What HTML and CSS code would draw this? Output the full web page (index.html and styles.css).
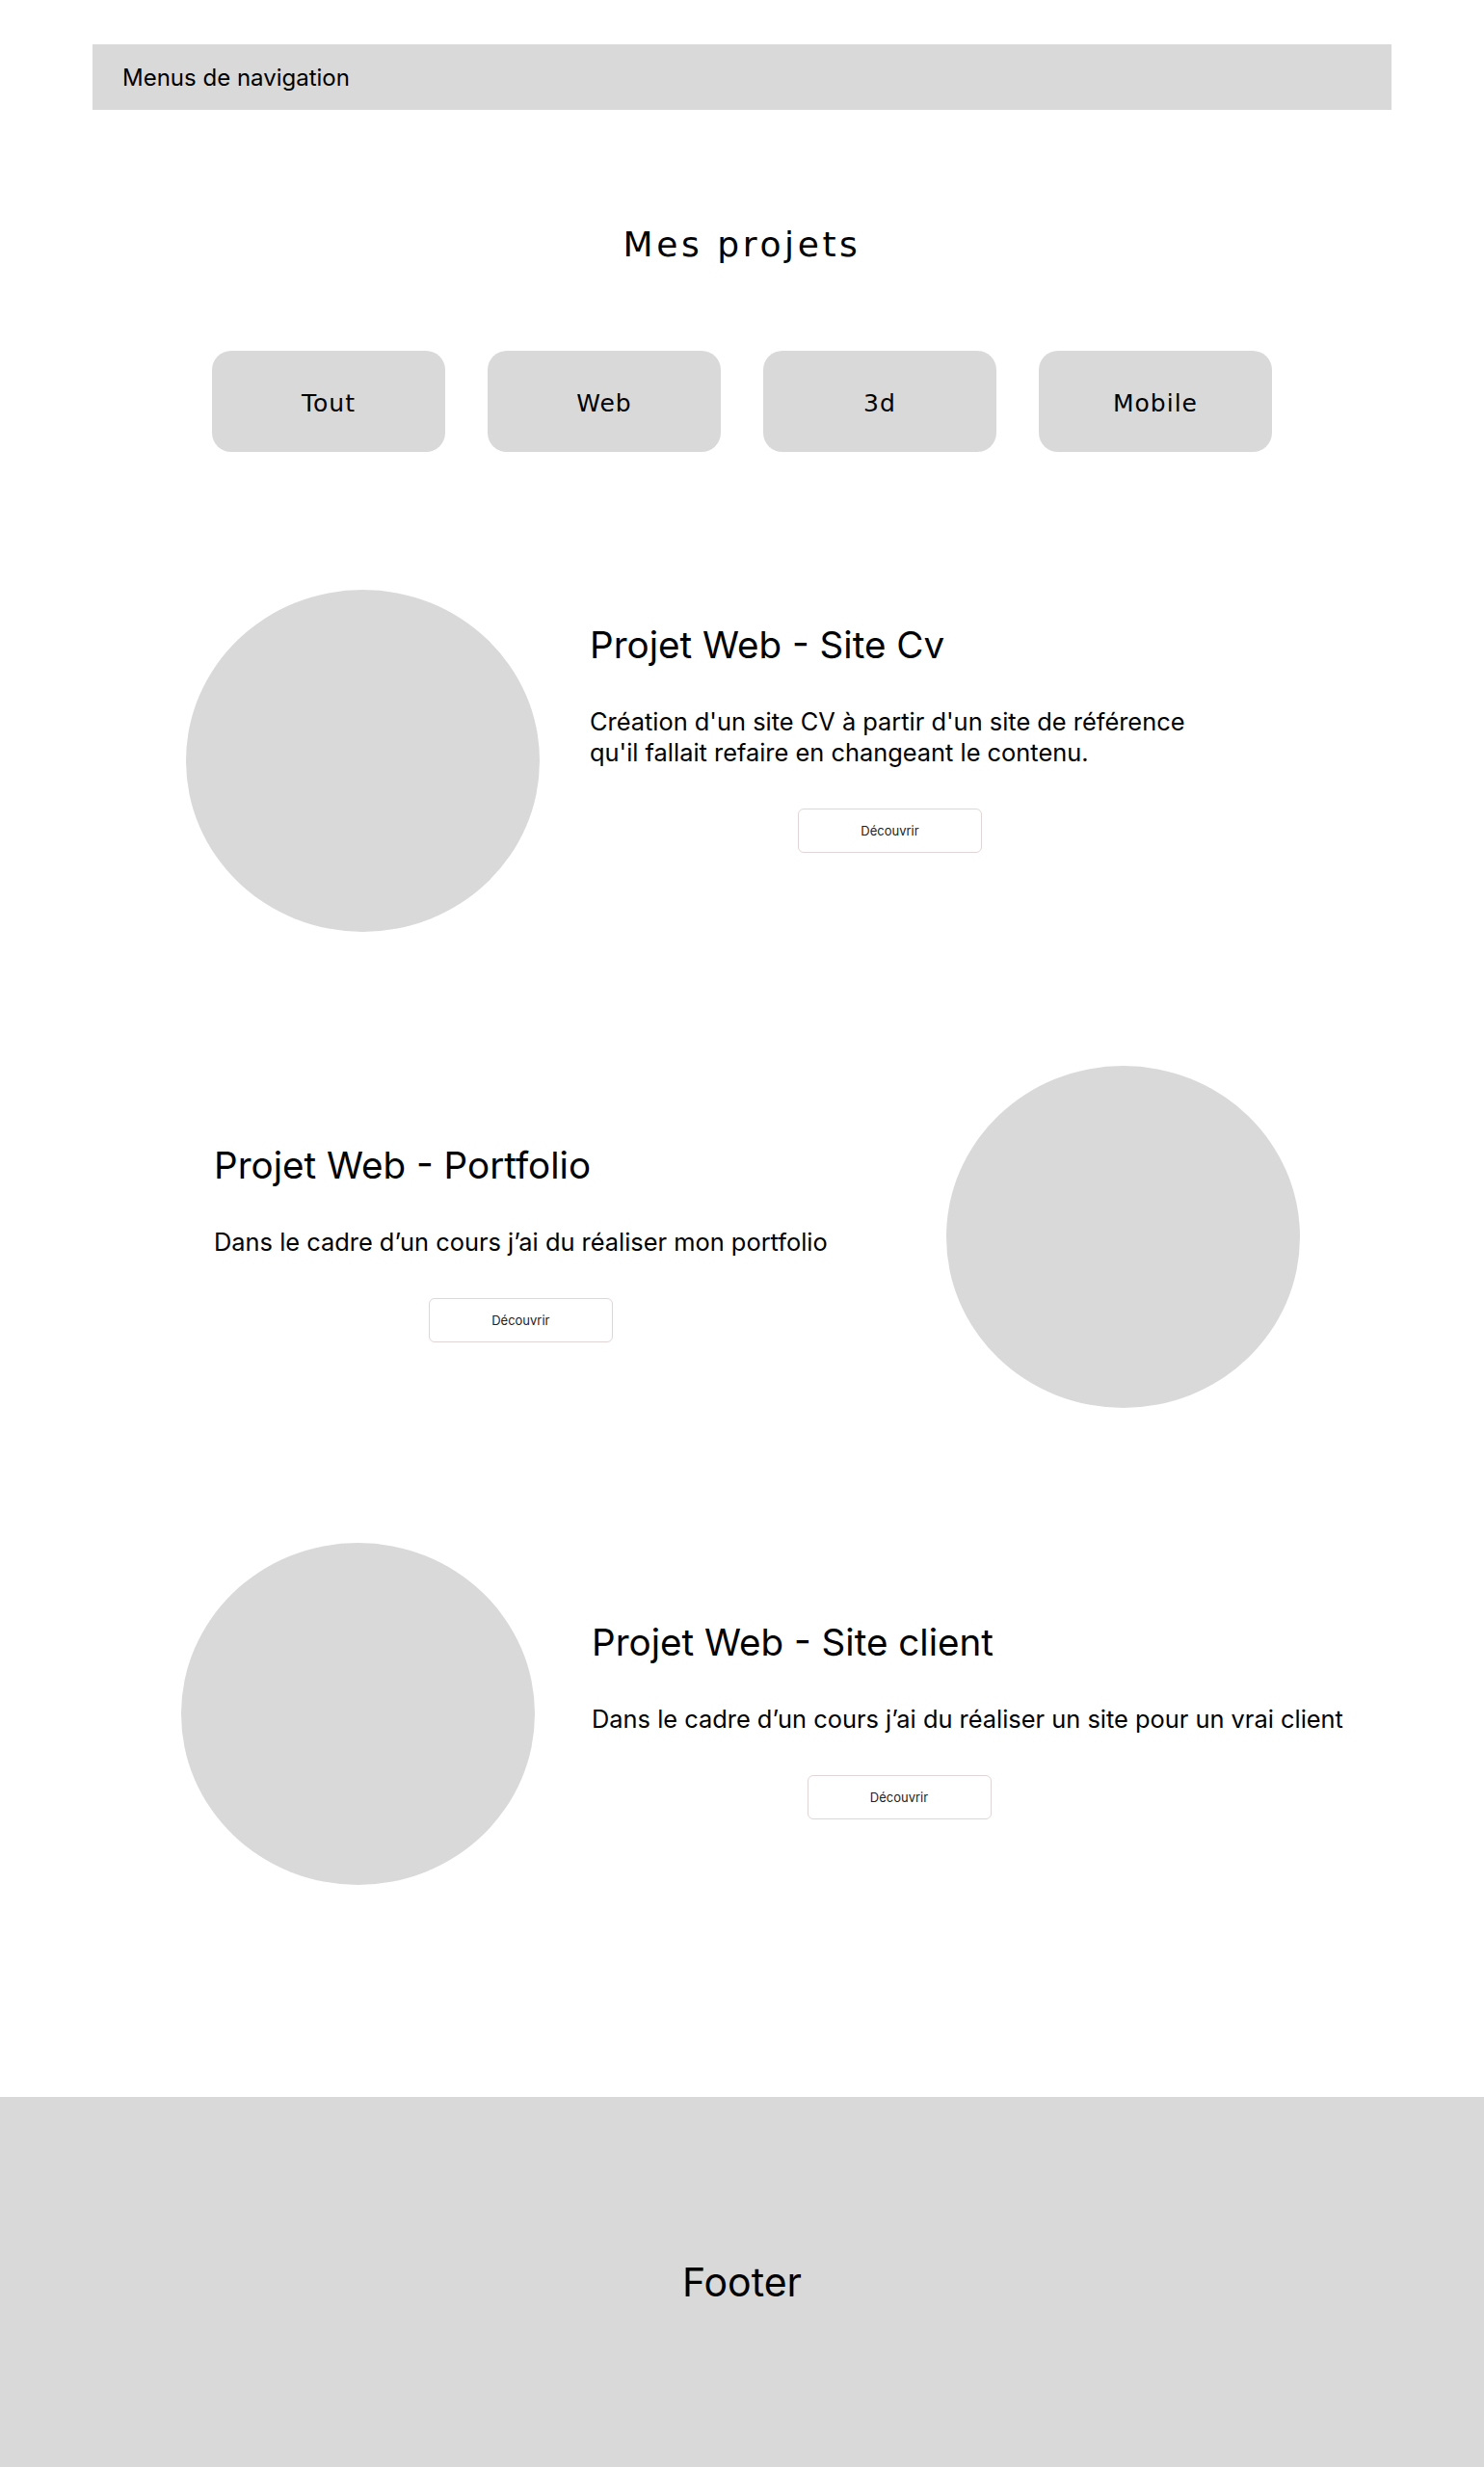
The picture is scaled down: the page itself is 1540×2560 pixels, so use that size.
FILE: index.html
```html
<!DOCTYPE html>
<html lang="fr">
<head>
<meta charset="utf-8">
<title>Mes projets</title>
<link rel="stylesheet" href="styles.css">
</head>
<body>
<header class="nav">
  <span class="nav-label">Menus de navigation</span>
</header>

<main class="main">
  <h1 class="page-title">Mes projets</h1>

  <div class="filters">
    <button class="filter">Tout</button>
    <button class="filter">Web</button>
    <button class="filter">3d</button>
    <button class="filter">Mobile</button>
  </div>

  <section class="project project--one">
    <div class="project-image"></div>
    <div class="project-text project-text--high">
      <h2 class="project-title">Projet Web - Site Cv</h2>
      <p class="project-desc">Création d'un site CV à partir d'un site de référence<br>qu'il fallait refaire en changeant le contenu.</p>
      <button class="discover">Découvrir</button>
    </div>
  </section>

  <section class="project project--two">
    <div class="project-text">
      <h2 class="project-title">Projet Web - Portfolio</h2>
      <p class="project-desc">Dans le cadre d’un cours j’ai du réaliser mon portfolio</p>
      <button class="discover">Découvrir</button>
    </div>
    <div class="project-image"></div>
  </section>

  <section class="project project--three">
    <div class="project-image"></div>
    <div class="project-text project-text--fixed">
      <h2 class="project-title">Projet Web - Site client</h2>
      <p class="project-desc project-desc--nowrap">Dans le cadre d’un cours j’ai du réaliser un site pour un vrai client</p>
      <button class="discover">Découvrir</button>
    </div>
  </section>
</main>

<footer class="footer">
  <span class="footer-label">Footer</span>
</footer>
</body>
</html>
```

FILE: styles.css
```css
* {
  box-sizing: border-box;
}

html, body {
  margin: 0;
  padding: 0;
  background: #ffffff;
}

body {
  font-family: "Inter", "Noto Sans", "Liberation Sans", sans-serif;
  color: #000000;
  width: 1540px;
  min-height: 2560px;
  display: flex;
  flex-direction: column;
}

.nav {
  margin: 46px 96px 0 96px;
  height: 68px;
  background: #d9d9d9;
  display: flex;
  align-items: center;
  padding-left: 31px;
  padding-top: 2px;
}

.nav-label {
  font-size: 24px;
  font-weight: 400;
  line-height: 1;
}

.main {
  flex: 1;
  display: flex;
  flex-direction: column;
}

.page-title {
  margin: 118px 0 0 0;
  text-align: center;
  font-family: "DejaVu Sans", sans-serif;
  font-weight: 400;
  font-size: 36px;
  line-height: 44px;
  letter-spacing: 3.6px;
}

.filters {
  margin-top: 88px;
  display: flex;
  justify-content: center;
  gap: 44px;
}

.filter {
  width: 242px;
  height: 105px;
  border: none;
  border-radius: 20px;
  background: #d9d9d9;
  font-family: "DejaVu Sans", sans-serif;
  font-size: 25px;
  letter-spacing: 1px;
  color: #000000;
  padding: 3px 0 0 0;
}

.project {
  display: flex;
  align-items: flex-start;
}

.project--one {
  margin-top: 143px;
  padding-left: 193px;
  gap: 52px;
}

.project--two {
  margin-top: 139px;
  padding-left: 222px;
  gap: 123px;
}

.project--three {
  margin-top: 140px;
  padding-left: 188px;
  gap: 59px;
}

.project-image {
  width: 367px;
  height: 355px;
  border-radius: 50%;
  background: #d9d9d9;
  flex: none;
}

.project-text {
  display: flex;
  flex-direction: column;
  margin-top: 80px;
}

.project-text--high {
  margin-top: 34px;
  width: 623px;
}

.project-text--fixed {
  width: 638px;
}

.project-title {
  margin: 0;
  font-size: 38.6px;
  font-weight: 400;
  line-height: 46px;
}

.project-desc {
  margin: 41px 0 0 0;
  font-size: 25.4px;
  font-weight: 400;
  line-height: 32px;
  white-space: nowrap;
}

.project-desc--nowrap {
  white-space: nowrap;
}

.discover {
  align-self: center;
  margin-top: 42px;
  width: 191px;
  height: 46px;
  border: 1px solid #e2d5d5;
  border-radius: 6px;
  background: #ffffff;
  font-family: "Inter", "Liberation Sans", sans-serif;
  font-size: 13px;
  color: #222222;
  padding: 0;
}

.footer {
  margin-top: 217px;
  height: 384px;
  background: #d9d9d9;
  display: flex;
  align-items: center;
  justify-content: center;
}

.footer-label {
  font-size: 41px;
  font-weight: 400;
  line-height: 1;
}
```
